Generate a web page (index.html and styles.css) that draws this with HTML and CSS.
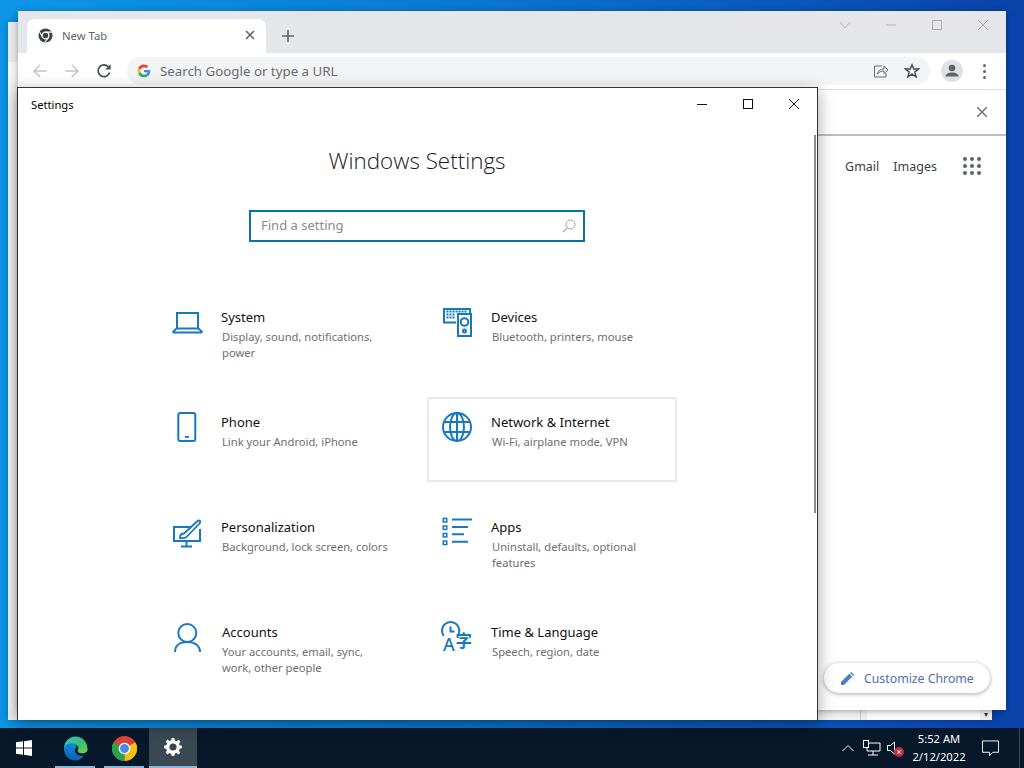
FILE: index.html
```html
<!DOCTYPE html>
<html lang="en">
<head>
<meta charset="utf-8">
<title>Windows Settings</title>
<link rel="stylesheet" href="styles.css">
</head>
<body>
<div class="desktop">
  <div class="window rear">
    <div class="rear-top"></div>
    <div class="rear-body"></div>
    <div class="rear-foot"><span class="rf-a"></span><span class="rf-b"></span><span class="rf-c"></span><span class="rf-d">▾</span></div>
  </div>

  <div class="window chrome">
    <div class="tabstrip">
      <div class="tab">
        <svg class="fav" viewBox="0 0 16 16"><circle cx="8" cy="8" r="7.5" fill="#3c4043"/><circle cx="8" cy="8" r="3.6" fill="#3c4043" stroke="#fff" stroke-width="1.4"/><path d="M8 4.4H15M5 10L1.6 4M10.8 10.5L7.2 15.4" stroke="#fff" stroke-width="1.1" fill="none"/></svg>
        <span class="tab-title">New Tab</span>
        <svg class="tab-x" viewBox="0 0 10 10"><path d="M1 1L9 9M9 1L1 9" stroke="#5f6368" stroke-width="1.5"/></svg>
      </div>
      <svg class="newtab" viewBox="0 0 12 12"><path d="M6 0V12M0 6H12" stroke="#5f6368" stroke-width="1.6"/></svg>
      <div class="wctl">
        <svg class="wc wc-chev" viewBox="0 0 12 12"><path d="M1 3L6 9L11 3" stroke="#b4b7ba" fill="none"/></svg>
        <svg class="wc" viewBox="0 0 12 12"><path d="M1 6H11" stroke="#b0b3b6"/></svg>
        <svg class="wc" viewBox="0 0 12 12"><rect x="1.5" y="1.5" width="9" height="9" fill="none" stroke="#a8abae"/></svg>
        <svg class="wc" viewBox="0 0 12 12"><path d="M1 1L11 11M11 1L1 11" stroke="#a8abae"/></svg>
      </div>
    </div>
    <div class="toolbar">
      <svg class="nav" viewBox="0 0 16 16"><path d="M15 8H2M8 2L2 8L8 14" stroke="#c4c7c9" stroke-width="1.6" fill="none"/></svg>
      <svg class="nav" viewBox="0 0 16 16"><path d="M1 8H14M8 2L14 8L8 14" stroke="#c4c7c9" stroke-width="1.6" fill="none"/></svg>
      <svg class="nav" viewBox="0 0 16 16"><path d="M13.6 9.6A5.9 5.9 0 1 1 12.3 3.7" stroke="#4a4d50" stroke-width="1.7" fill="none"/><path d="M14.6 1.2V6.6H9.2Z" fill="#4a4d50"/></svg>
      <div class="omnibox">
        <svg class="g" viewBox="0 0 16 16"><path d="M15 8.2c0-.5 0-1-.1-1.4H8v2.7h4a3.4 3.4 0 0 1-1.5 2.2l2.3 1.8c1.4-1.2 2.2-3.1 2.2-5.3z" fill="#4285f4"/><path d="M8 15c2 0 3.600-.6 4.800-1.700l-2.300-1.800c-.6.4-1.500.7-2.500.7-1.900 0-3.600-1.300-4.200-3L1.400 11A7 7 0 0 0 8 15z" fill="#34a853"/><path d="M3.800 9.200a4.200 4.200 0 0 1 0-2.700L1.400 4.700a7 7 0 0 0 0 6.300z" fill="#fbbc05"/><path d="M8 3.800c1.100 0 2.100.4 2.800 1.100l2.100-2.100A7 7 0 0 0 1.400 4.700l2.400 1.800C4.400 5 6.100 3.800 8 3.800z" fill="#ea4335"/></svg>
        <span class="omni-text">Search Google or type a URL</span>
        <svg class="share" viewBox="0 0 16 16"><path d="M9 3H1.500V14H13V10M4.500 11C5 7.500 7.500 6 11 6V3.200L15 7L11 10.500V8C8 8 6 9 4.500 11Z" stroke="#6a6d70" fill="none"/></svg>
        <svg class="star" viewBox="0 0 16 16"><path d="M8 1.800L9.800 6H14.500L10.800 9L12.100 13.800L8 11.100L3.900 13.800L5.200 9L1.500 6H6.200Z" stroke="#45484b" stroke-width="1.400" fill="none"/></svg>
      </div>
      <div class="avatar"><svg viewBox="0 0 22 22"><circle cx="11" cy="8" r="3.300" fill="#5f6368"/><path d="M4.500 16.500c0-3 3.500-4 6.500-4s6.500 1 6.500 4z" fill="#5f6368"/></svg></div>
      <div class="kebab"><i></i><i></i><i></i></div>
    </div>
    <div class="infobar"><svg class="info-x" viewBox="0 0 10 10"><path d="M0 0L10 10M10 0L0 10" stroke="#707376" stroke-width="1.500"/></svg></div>
    <div class="ntp">
      <div class="ntp-links">
        <span class="ntp-link">Gmail</span>
        <span class="ntp-link">Images</span>
        <div class="apps"><i></i><i></i><i></i><i></i><i></i><i></i><i></i><i></i><i></i></div>
      </div>
      <div class="ntp-foot">
        <div class="customize">
          <svg class="pencil" viewBox="0 0 14 14"><path d="M0 14V10.800L8.800 2L12 5.200L3.200 14ZM9.800 1L11 0L14 3L13 4.200Z" fill="#4d7cc4"/></svg>
          <span>Customize Chrome</span>
        </div>
      </div>
    </div>
  </div>

  <div class="window settings">
    <div class="titlebar">
      <span class="app-title">Settings</span>
      <div class="sctl">
        <svg class="sc" viewBox="0 0 12 12"><path d="M1 6.500H11" stroke="#111"/></svg>
        <svg class="sc" viewBox="0 0 12 12"><rect x="1.500" y="1.500" width="9" height="9" fill="none" stroke="#111"/></svg>
        <svg class="sc" viewBox="0 0 12 12"><path d="M1 1L11 11M11 1L1 11" stroke="#111"/></svg>
      </div>
    </div>
    <div class="s-body">
      <h1 class="s-head">Windows Settings</h1>
      <div class="search">
        <span class="search-ph">Find a setting</span>
        <svg class="search-i" viewBox="0 0 14 14"><circle cx="8.500" cy="5.500" r="4.500" fill="none" stroke="#a5a5a5"/><path d="M5.200 8.800L1 13" stroke="#a5a5a5" stroke-width="1.200"/></svg>
      </div>
      <div class="grid">
        <div class="item">
          <svg class="ico" viewBox="0 0 32 32"><path d="M5 21V6H26V21" fill="none" stroke="#1678bf" stroke-width="2"/><path d="M1 24.800L4.500 21.500H26.500L30 24.800Q30 25.500 29 25.500H2Q1 25.500 1 24.800Z" fill="none" stroke="#1678bf" stroke-width="1.800"/></svg>
          <div class="txt"><div class="t">System</div><div class="d">Display, sound, notifications, power</div></div>
        </div>
        <div class="item">
          <svg class="ico" viewBox="0 0 32 32"><g fill="none" stroke="#1678bf" stroke-width="2"><path d="M14 15.500H2V2H28V6"/><rect x="16" y="7" width="13" height="22"/><circle cx="22.500" cy="15" r="3.800"/><circle cx="22.500" cy="24" r="1.500"/></g><path d="M4.500 4.500H25.500M4.500 7.500H13M4.500 10.500H13" stroke="#1678bf" stroke-width="1.800" stroke-dasharray="2 1"/></svg>
          <div class="txt"><div class="t">Devices</div><div class="d">Bluetooth, printers, mouse</div></div>
        </div>
        <div class="item">
          <svg class="ico" viewBox="0 0 32 32"><rect x="6.300" y="1" width="17" height="28" rx="2" fill="none" stroke="#1678bf" stroke-width="2"/><rect x="13" y="24" width="4" height="1.800" fill="#1678bf"/></svg>
          <div class="txt"><div class="t">Phone</div><div class="d">Link your Android, iPhone</div></div>
        </div>
        <div class="item active">
          <svg class="ico" viewBox="0 0 32 32"><g fill="none" stroke="#1678bf" stroke-width="2"><circle cx="15" cy="15" r="14"/><ellipse cx="15" cy="15" rx="7" ry="14"/><path d="M15 1V29M2.500 10H27.500M2.500 20H27.500"/></g></svg>
          <div class="txt"><div class="t">Network &amp; Internet</div><div class="d">Wi-Fi, airplane mode, VPN</div></div>
        </div>
        <div class="item">
          <svg class="ico" viewBox="0 0 32 32"><g fill="none" stroke="#1678bf" stroke-width="2"><path d="M19 10H2V24H28V12"/><path d="M14.500 24V29M9 29.500H20"/></g><path d="M8 21C8 17 10 16.500 12 16.500L25 4.500C27 2.500 29.500 4 27.500 6.500L15.500 19C14 21 11 21.500 8 21Z" fill="#fff" stroke="#1678bf" stroke-width="1.800"/></svg>
          <div class="txt"><div class="t">Personalization</div><div class="d">Background, lock screen, colors</div></div>
        </div>
        <div class="item">
          <svg class="ico" viewBox="0 0 32 32"><g fill="#1678bf"><rect x=".5" y=".7" width="5" height="5"/><rect x=".5" y="8.200" width="5" height="5"/><rect x=".5" y="15.700" width="5" height="5"/><rect x=".5" y="23.300" width="5" height="5"/></g><g fill="#fff"><rect x="2" y="2.200" width="2" height="2"/><rect x="2" y="9.700" width="2" height="2"/><rect x="2" y="17.200" width="2" height="2"/><rect x="2" y="24.800" width="2" height="2"/></g><path d="M10 2.500H30M10 10H26M10 17.300H22M10 24.800H26" stroke="#1678bf" stroke-width="2"/></svg>
          <div class="txt"><div class="t">Apps</div><div class="d">Uninstall, defaults, optional features</div></div>
        </div>
        <div class="item">
          <svg class="ico" viewBox="0 0 32 32"><circle cx="15.300" cy="11" r="9" fill="none" stroke="#1678bf" stroke-width="2"/><path d="M3 30C3 23.500 8 20 15.300 20C22.500 20 28 23.500 28 30" fill="none" stroke="#1678bf" stroke-width="2"/></svg>
          <div class="txt"><div class="t sh">Accounts</div><div class="d sh">Your accounts, email, sync, work, other people</div></div>
        </div>
        <div class="item">
          <svg class="ico" viewBox="0 0 32 32"><path d="M1.800 14A8.700 8.700 0 1 1 15.500 14" fill="none" stroke="#1678bf" stroke-width="2"/><path d="M8.500 4.500V9.500H12.500" fill="none" stroke="#1678bf" stroke-width="2"/><text class="ic-a" x="1" y="29">A</text><text class="ic-z" x="13.500" y="25">字</text></svg>
          <div class="txt"><div class="t">Time &amp; Language</div><div class="d">Speech, region, date</div></div>
        </div>
      </div>
    </div>
    <div class="s-scroll"></div>
  </div>
</div>

<div class="taskbar">
  <div class="tb-btn start"><svg viewBox="0 0 16 16"><path d="M0 2.300L7 1.300V7.500H0ZM8 1.200L16 0V7.500H8ZM0 8.500H7V14.700L0 13.700ZM8 8.500H16V16L8 14.800Z" fill="#fff"/></svg></div>
  <div class="tb-btn run edge"><svg viewBox="0 0 26 26"><defs><linearGradient id="e1" x1="0" y1="0" x2="1" y2="1"><stop offset="0" stop-color="#37c6d0"/><stop offset=".6" stop-color="#3dbd6a"/><stop offset="1" stop-color="#7ad14a"/></linearGradient><linearGradient id="e2" x1="0" y1="0" x2="0" y2="1"><stop offset="0" stop-color="#0f8ad8"/><stop offset="1" stop-color="#0b5fb8"/></linearGradient></defs><path d="M1 13C1 6 6.500 .5 13 .5C20 .5 25.500 6 25.500 14C25.500 17 22 18.500 18.500 18C15.500 17.500 14.500 16 15.500 14C17 12 15 8.500 11 8.500C5 8.500 1 13 1 13Z" fill="url(#e1)"/><path d="M1 13C1 9 5.500 7 10 7.500C14 8 15 11 13 13C11 16 14 20 18 20.500C20 20.700 21 20.500 21.500 20.500C19 24 16 25.500 13 25.500C6 25.500 1 20 1 13Z" fill="url(#e2)"/></svg></div>
  <div class="tb-btn run chr"><svg viewBox="0 0 24 24"><circle cx="12" cy="12" r="12" fill="#db4437"/><path d="M12 12L22.400 6A12 12 0 0 1 12 24Z" fill="#f4c20d"/><path d="M12 12L12 24A12 12 0 0 1 1.600 6Z" fill="#2e9e4f"/><circle cx="12" cy="12" r="5.600" fill="#fff"/><circle cx="12" cy="12" r="4.300" fill="#4d86ea"/></svg></div>
  <div class="tb-btn focus"><svg viewBox="0 0 20 20"><path d="M8.500 0H11.500L12 2.700L14 3.500L16.300 2L18.300 4.100L16.700 6.300L17.500 8.300L20 8.600V11.500L17.400 12L16.600 14L18.100 16.300L16.100 18.300L13.900 16.800L11.900 17.500L11.500 20H8.500L8 17.400L6 16.600L3.800 18.200L1.800 16.200L3.300 13.900L2.500 12L0 11.500V8.500L2.600 8L3.400 6L1.900 3.800L3.900 1.800L6.100 3.300L8 2.500Z" fill="#fff"/><circle cx="10" cy="10" r="4" fill="#3a4852"/></svg></div>
  <div class="tray">
    <svg class="tr-chev" viewBox="0 0 12 8"><path d="M.5 7L6 1.500L11.500 7" fill="none" stroke="#fff"/></svg>
    <svg class="tr-net" viewBox="0 0 18 16"><path d="M4 3H17V11H4ZM10 11V15M5 15H15" fill="none" stroke="#fff" stroke-width="1"/><rect x=".5" y=".5" width="5" height="7" fill="#06182a" stroke="#fff"/></svg>
    <div class="tr-snd">
      <svg class="spk" viewBox="0 0 10 14"><path d="M.5 4.500H3.500L7.500 1V13L3.500 9.500H.5Z" fill="none" stroke="#fff"/></svg>
      <svg class="mute" viewBox="0 0 10 10"><circle cx="5" cy="5" r="5" fill="#c42b3c"/><path d="M3 3L7 7M7 3L3 7" stroke="#fff"/></svg>
    </div>
    <div class="clock"><div>5:52 AM</div><div>2/12/2022</div></div>
    <svg class="notif" viewBox="0 0 18 17"><path d="M.5 .5H17.500V12.500H11.500L8 16V12.500H.5Z" fill="none" stroke="#fff"/></svg>
    <span class="peek"></span>
  </div>
</div>
</body>
</html>
```
FILE: styles.css
```css
* { box-sizing: border-box; }
html, body { margin: 0; height: 100%; }
body {
  width: 1024px;
  height: 768px;
  overflow: hidden;
  display: flex;
  flex-direction: column;
  font-family: "Noto Sans", "Open Sans", sans-serif;
}
.desktop {
  position: relative;
  flex: 1;
  background: linear-gradient(90deg, #0d97e8 0%, #0a78d4 45%, #0a4fb4 85%, #0a42aa 100%);
}
.window { position: absolute; }

/* rear window */
.rear {
  left: 8px; top: 22px; width: 984px; height: 698px;
  background: #f3f3f3;
  display: flex;
  flex-direction: column;
  box-shadow: 0 0 8px rgba(0,0,0,.25);
}
.rear-top { height: 40px; background: #e6e6e6; }
.rear-body { flex: 1; background: #f4f4f4; }
.rear-foot {
  height: 10px;
  background: #f1f1f1;
  display: flex;
  font-size: 8px;
  line-height: 8px;
  color: #333;
}
.rf-a { width: 852px; }
.rf-b { width: 7px; border-left: 1px solid #c8c8c8; background: #ececec; }
.rf-c { flex: 1; background: #fafafa; }
.rf-d { width: 12px; text-align: center; background: #ececec; }

/* chrome window */
.chrome {
  left: 18px; top: 11px; width: 988px; height: 699px;
  background: #fff;
  display: flex;
  flex-direction: column;
  box-shadow: 0 1px 6px rgba(0,0,0,.35);
}
.tabstrip {
  height: 42px;
  background: #e4e6e9;
  display: flex;
  align-items: flex-end;
  padding-left: 9px;
}
.tab {
  width: 239px;
  height: 34px;
  background: #fff;
  border-radius: 8px 8px 0 0;
  display: flex;
  align-items: center;
  padding: 0 11px 2px 11px;
}
.fav { width: 15px; height: 15px; }
.tab-title { margin-left: 9px; font-size: 11.300px; color: #5f6368; flex: 1; }
.tab-x { width: 10px; height: 10px; }
.newtab { width: 12px; height: 12px; margin: 0 0 11px 16px; }
.wctl { margin-left: auto; align-self: flex-start; display: flex; padding-top: 8px; padding-right: 17px; }
.wc { width: 12px; height: 12px; margin-left: 34px; }
.toolbar {
  height: 37px;
  display: flex;
  align-items: center;
  padding-left: 14px;
  border-bottom: 1px solid #dadce0;
}
.nav { width: 16px; height: 16px; margin-right: 16px; }
.omnibox {
  width: 803px;
  height: 28px;
  margin-left: -1px;
  border-radius: 14px;
  background: #f3f4f5;
  display: flex;
  align-items: center;
  padding: 0 10px;
}
.g { width: 14px; height: 14px; }
.omni-text { margin-left: 9px; font-size: 13.300px; color: #6a6d70; flex: 1; }
.share { width: 16px; height: 16px; margin-right: 15px; }
.star { width: 16px; height: 16px; }
.avatar {
  width: 22px; height: 22px; border-radius: 50%;
  background: #dfe1e5; margin-left: 11px;
}
.avatar svg { display: block; }
.kebab { display: flex; flex-direction: column; gap: 3px; margin-left: 20px; }
.kebab i { width: 3px; height: 3px; border-radius: 50%; background: #5f6368; display: block; }
.infobar {
  height: 46px;
  border-bottom: 2px solid #bdbdbd;
  display: flex;
  align-items: center;
  justify-content: flex-end;
  padding-right: 19px;
}
.info-x { width: 10px; height: 10px; }
.ntp { flex: 1; display: flex; flex-direction: column; justify-content: space-between; padding: 21px 16px 17px 0; }
.ntp-links { display: flex; align-items: center; justify-content: flex-end; padding-right: 9px; }
.ntp-link { font-size: 12.500px; color: #3c4043; margin-left: 14px; }
.apps { display: grid; grid-template-columns: repeat(3, 4px); gap: 3px; margin-left: 26px; }
.apps i { width: 4px; height: 4px; border-radius: 50%; background: #5f6368; display: block; }
.ntp-foot { display: flex; justify-content: flex-end; }
.customize {
  width: 166px; height: 30px;
  background: #fff;
  border-radius: 15px;
  box-shadow: 0 1px 4px rgba(0,0,0,.35);
  display: flex;
  align-items: center;
  padding-left: 17px;
  font-size: 12.300px;
  color: #4d6fb0;
}
.pencil { width: 13px; height: 13px; margin-right: 10px; }

/* settings window */
.settings {
  left: 17px; top: 87px; width: 801px; height: 633px;
  background: #fff;
  border: 1px solid #333;
  border-bottom: 0;
  box-shadow: 0 4px 16px rgba(0,0,0,.35);
}
.titlebar { height: 32px; display: flex; align-items: center; padding-left: 13px; }
.app-title { font-size: 11.200px; color: #000; }
.sctl { margin-left: auto; display: flex; padding-right: 17px; }
.sc { width: 12px; height: 12px; margin-left: 34px; }
.s-body { display: flex; flex-direction: column; align-items: center; padding-right: 1px; }
.s-head {
  margin: 24px 0 0;
  height: 34px;
  line-height: 34px;
  font-size: 22.400px;
  font-weight: 300;
  color: #1a1a1a;
  font-family: "Open Sans", "Noto Sans", sans-serif;
}
.search {
  margin-top: 32px;
  width: 336px; height: 32px;
  border: 2px solid #0f6fa8;
  display: flex;
  align-items: center;
  justify-content: space-between;
  padding: 0 7px 2px 10px;
}
.search-ph { font-size: 13px; color: #8a8a8a; }
.search-i { width: 14px; height: 14px; margin-top: 2px; }
.grid {
  margin: 50px 0 0 0;
  display: grid;
  grid-template-columns: repeat(2, 250px);
  grid-auto-rows: 85px;
  gap: 20px;
}
.item {
  display: flex;
  border: 2px solid transparent;
  padding: 13px 13px 0;
}
.item.active { border-color: #e8e8e8; }
.ico { width: 32px; height: 32px; flex: none; overflow: visible; }
.ic-a { font: 500 18px "Noto Sans", sans-serif; fill: #1678bf; }
.ic-z { font: 700 16.500px "Noto Sans CJK SC", sans-serif; fill: #1678bf; }
.txt { margin-left: 17px; width: 168px; }
.t { font-size: 13px; line-height: 20px; color: #111; }
.d { font-size: 11.200px; line-height: 16px; color: #6e6e6e; margin-left: 1px; margin-top: 2px; }
.sh { margin-left: 1px; }
.s-scroll { position: absolute; right: 1px; top: 47px; width: 2px; height: 378px; background: #8b8b8b; }

/* taskbar */
.taskbar {
  height: 40px;
  background: #06182a;
  display: flex;
  color: #fff;
}
.tb-btn { height: 40px; display: flex; align-items: center; justify-content: center; }
.start { width: 48px; }
.start svg { width: 16px; height: 16px; }
.run { width: 40px; border-bottom: 2px solid #8bb6d8; padding-top: 2px; }
.edge { margin-left: 7px; }
.chr { margin-left: 9px; }
.run svg { width: 25px; height: 25px; flex: none; }
.focus { width: 48px; margin-left: 5px; background: #3a4852; border-bottom: 2px solid #8bb6d8; }
.focus svg { width: 18px; height: 18px; }
.tray { margin-left: auto; display: flex; align-items: center; }
.tr-chev { width: 12px; height: 8px; margin-right: 9px; }
.tr-net { width: 18px; height: 16px; margin-right: 6px; }
.tr-snd { position: relative; width: 16px; height: 16px; margin-right: 3px; display: flex; align-items: center; }
.spk { width: 10px; height: 14px; }
.mute { position: absolute; left: 7px; top: 7px; width: 10px; height: 10px; }
.clock { width: 66px; text-align: center; font-size: 11.200px; line-height: 18px; }
.notif { width: 17px; height: 17px; margin-left: 10px; }
.peek { width: 1px; height: 40px; background: #3a4852; margin-left: 20px; margin-right: 4px; }
```
